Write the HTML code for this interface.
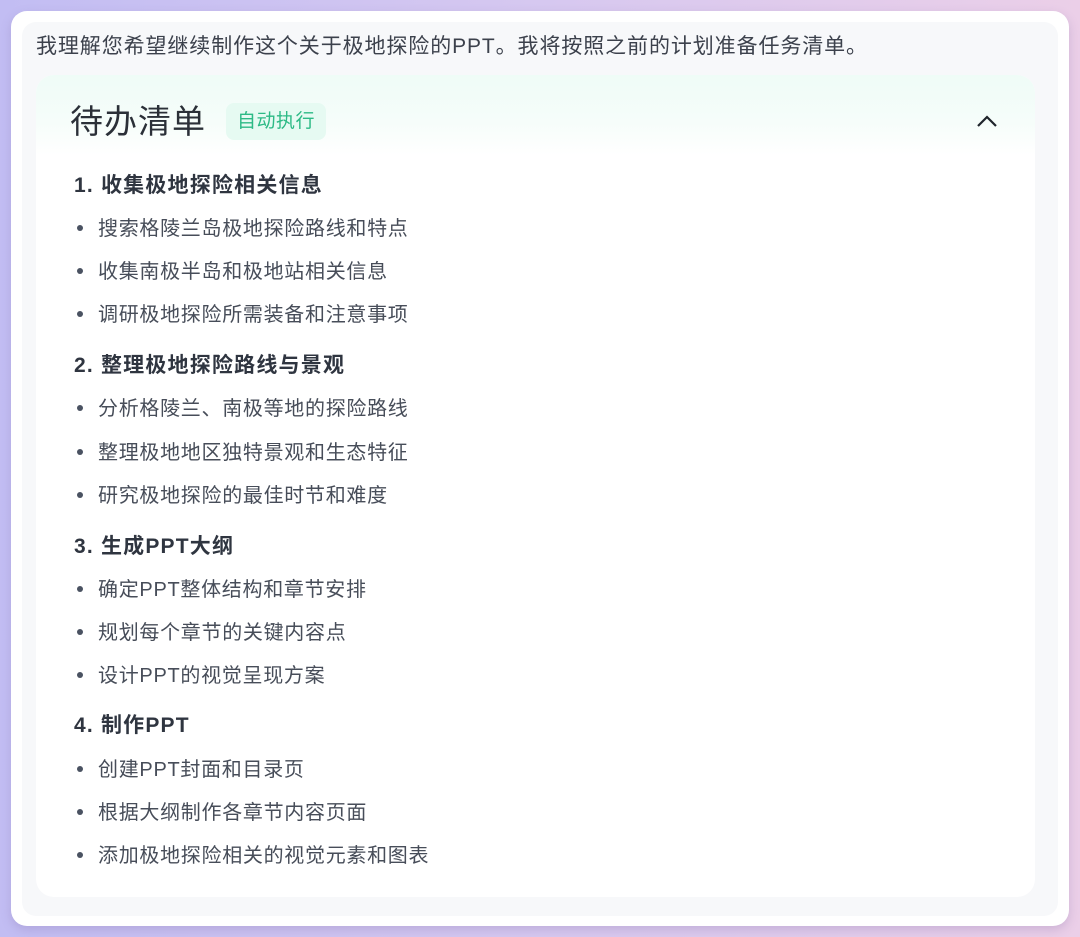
<!DOCTYPE html>
<html><head><meta charset="utf-8"><style>
*{margin:0;padding:0;box-sizing:border-box}
body{width:1080px;height:937px;overflow:hidden;background:linear-gradient(90deg,#c2bdf3 0%,#d6c8f0 50%,#ebcfe8 100%);font-family:"Liberation Sans","Noto Sans CJK SC",sans-serif;position:relative}
.outer{position:absolute;left:11px;top:11px;width:1058px;height:915px;background:#fff;border-radius:16px;box-shadow:0 4px 10px rgba(120,100,160,.25)}
.panel{position:absolute;left:22px;top:22px;width:1036px;height:894px;background:#f7f8fa;border-radius:14px}
.card{position:absolute;left:36px;top:75px;width:999px;height:822px;background:#fff;border-radius:18px;overflow:hidden}
.grad{position:absolute;left:0;top:0;width:100%;height:80px;background:linear-gradient(180deg,#effcf7 0%,#f6fdfa 60%,#fff 100%)}
.t{position:absolute;white-space:nowrap;color:#474d59;font-size:20px;letter-spacing:.7px;line-height:1}
.h{color:#2f3540;font-weight:bold;font-size:21px;letter-spacing:1.2px}
.dot{position:absolute;width:6px;height:6px;border-radius:50%;background:#4a5261}
</style></head><body>
<div class="outer"></div>
<div class="panel"></div>
<div class="t" style="left:36px;top:36px;font-size:21px;letter-spacing:.9px;color:#3c414c">我理解您希望继续制作这个关于极地探险的PPT。我将按照之前的计划准备任务清单。</div>
<div class="card"><div class="grad"></div></div>
<div class="t" style="left:70px;top:105px;font-size:33px;color:#2b3038;letter-spacing:1px">待办清单</div>
<div style="position:absolute;left:226px;top:103px;width:100px;height:37px;background:#e6faf2;border-radius:8px"></div>
<div class="t" style="left:237px;top:112px;font-size:19px;color:#2dba86;letter-spacing:.5px">自动执行</div>
<svg style="position:absolute;left:976px;top:114px" width="22" height="14" viewBox="0 0 22 14"><path d="M2 12 L11 3 L20 12" fill="none" stroke="#1f242b" stroke-width="2.2"/></svg>

<div class="t h" style="left:74px;top:175px">1. 收集极地探险相关信息</div>
<div class="dot" style="left:77px;top:225px"></div><div class="t" style="left:98px;top:219px">搜索格陵兰岛极地探险路线和特点</div>
<div class="dot" style="left:77px;top:268px"></div><div class="t" style="left:98px;top:262px">收集南极半岛和极地站相关信息</div>
<div class="dot" style="left:77px;top:311px"></div><div class="t" style="left:98px;top:305px">调研极地探险所需装备和注意事项</div>

<div class="t h" style="left:74px;top:355px">2. 整理极地探险路线与景观</div>
<div class="dot" style="left:77px;top:405px"></div><div class="t" style="left:98px;top:399px">分析格陵兰、南极等地的探险路线</div>
<div class="dot" style="left:77px;top:449px"></div><div class="t" style="left:98px;top:443px">整理极地地区独特景观和生态特征</div>
<div class="dot" style="left:77px;top:492px"></div><div class="t" style="left:98px;top:486px">研究极地探险的最佳时节和难度</div>

<div class="t h" style="left:74px;top:536px">3. 生成PPT大纲</div>
<div class="dot" style="left:77px;top:586px"></div><div class="t" style="left:98px;top:580px">确定PPT整体结构和章节安排</div>
<div class="dot" style="left:77px;top:629px"></div><div class="t" style="left:98px;top:623px">规划每个章节的关键内容点</div>
<div class="dot" style="left:77px;top:672px"></div><div class="t" style="left:98px;top:666px">设计PPT的视觉呈现方案</div>

<div class="t h" style="left:74px;top:715px">4. 制作PPT</div>
<div class="dot" style="left:77px;top:766px"></div><div class="t" style="left:98px;top:760px">创建PPT封面和目录页</div>
<div class="dot" style="left:77px;top:809px"></div><div class="t" style="left:98px;top:803px">根据大纲制作各章节内容页面</div>
<div class="dot" style="left:77px;top:852px"></div><div class="t" style="left:98px;top:846px">添加极地探险相关的视觉元素和图表</div>
</body></html>
